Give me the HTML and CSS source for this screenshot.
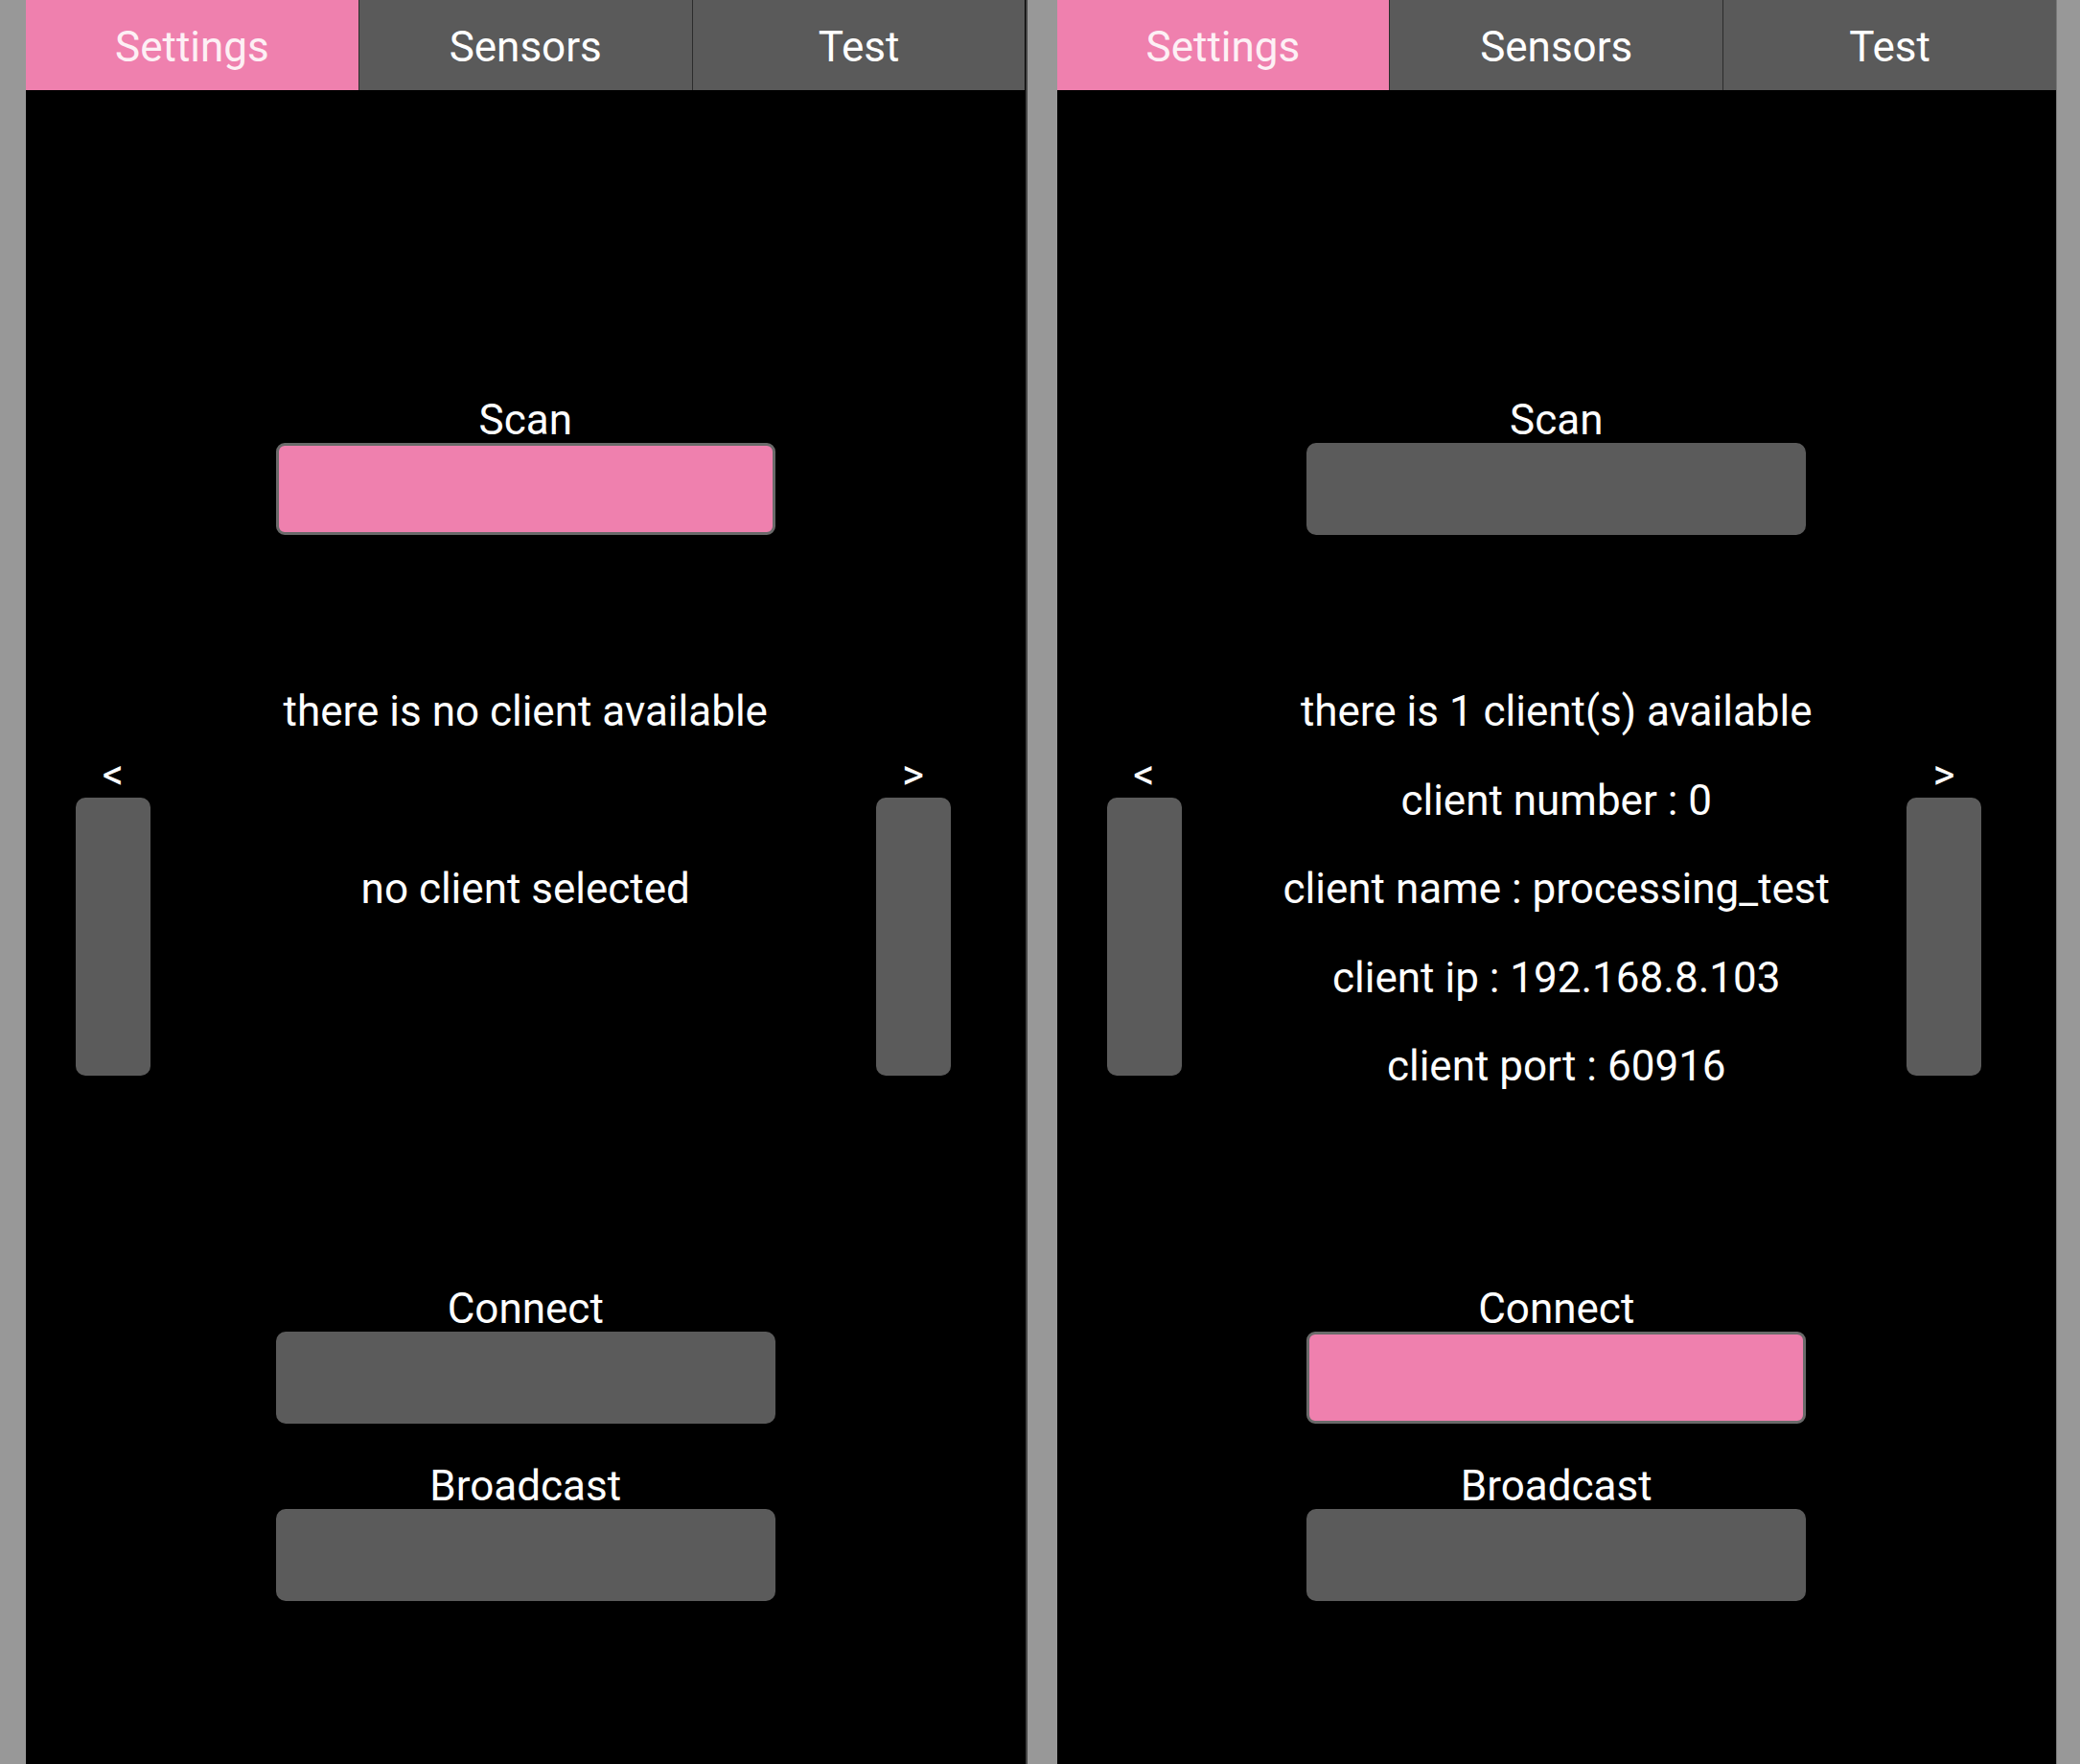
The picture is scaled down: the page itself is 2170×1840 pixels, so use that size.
FILE: index.html
```html
<!DOCTYPE html>
<html lang="en">
<head>
<meta charset="utf-8">
<title>Client settings</title>
<link rel="stylesheet" href="styles.css">
</head>
<body>
<div class="screen">
  <div class="edge edge-left"></div>

  <section class="panel">
    <nav class="tabs">
      <div class="tab active">Settings</div>
      <div class="tab">Sensors</div>
      <div class="tab">Test</div>
    </nav>
    <div class="control scan">
      <div class="caption">Scan</div>
      <div class="btn btn-on"></div>
    </div>
    <div class="clients">
      <div class="info">
        <p>there is no client available</p>
        <p></p>
        <p>no client selected</p>
        <p></p>
        <p></p>
      </div>
      <div class="side side-prev">
        <div class="caption">&lt;</div>
        <div class="side-btn"></div>
      </div>
      <div class="side side-next">
        <div class="caption">&gt;</div>
        <div class="side-btn"></div>
      </div>
    </div>
    <div class="control connect">
      <div class="caption">Connect</div>
      <div class="btn"></div>
    </div>
    <div class="control broadcast">
      <div class="caption">Broadcast</div>
      <div class="btn"></div>
    </div>
  </section>

  <div class="edge edge-mid"></div>

  <section class="panel">
    <nav class="tabs">
      <div class="tab active">Settings</div>
      <div class="tab">Sensors</div>
      <div class="tab">Test</div>
    </nav>
    <div class="control scan">
      <div class="caption">Scan</div>
      <div class="btn"></div>
    </div>
    <div class="clients">
      <div class="info">
        <p>there is 1 client(s) available</p>
        <p>client number : 0</p>
        <p>client name : processing_test</p>
        <p>client ip : 192.168.8.103</p>
        <p>client port : 60916</p>
      </div>
      <div class="side side-prev">
        <div class="caption">&lt;</div>
        <div class="side-btn"></div>
      </div>
      <div class="side side-next">
        <div class="caption">&gt;</div>
        <div class="side-btn"></div>
      </div>
    </div>
    <div class="control connect">
      <div class="caption">Connect</div>
      <div class="btn btn-on"></div>
    </div>
    <div class="control broadcast">
      <div class="caption">Broadcast</div>
      <div class="btn"></div>
    </div>
  </section>

  <div class="edge edge-right"></div>
</div>
</body>
</html>
```
FILE: styles.css
```css
html, body {
  margin: 0;
  padding: 0;
  background: #000;
}

body {
  font-family: Roboto, "Liberation Sans", sans-serif;
  color: #fff;
}

.screen {
  display: flex;
  height: 1840px;
  overflow: hidden;
}

.edge {
  flex: none;
  background: #989898;
  box-sizing: border-box;
}

.edge-left { width: 27px; }
.edge-mid { width: 33px; border-left: 2px solid #444; }
.edge-right { width: 25px; border-left: 1px solid #777; }

.panel {
  flex: 1 1 0;
  min-width: 0;
  background: #000;
  display: flex;
  flex-direction: column;
}

.tabs {
  display: flex;
  height: 94px;
  flex: none;
}

.tab {
  flex: 1 1 0;
  display: flex;
  align-items: center;
  justify-content: center;
  padding-top: 4px;
  box-sizing: border-box;
  background: #5a5a5a;
  color: #fff;
  font-size: 44px;
  border-left: 1px solid #2c2c2c;
}

.tab:first-child { border-left: none; }

.tab.active {
  background: #ef80ae;
  color: #fdf0f5;
}

.control {
  display: flex;
  flex-direction: column;
  align-items: center;
}

.caption {
  font-size: 44px;
  line-height: 48px;
  text-align: center;
  color: #fff;
}

.btn {
  width: 521px;
  height: 96px;
  box-sizing: border-box;
  border-radius: 10px;
  background: #5b5b5b;
}

.btn-on {
  background: #ef80ae;
  border: 3px solid #6a6a6a;
  border-radius: 9px;
}

.scan { margin-top: 320px; }

.clients {
  display: grid;
  grid-template-columns: 52px 78px 1fr 78px 78px;
  margin-top: 138px;
}

.info {
  grid-row: 1;
  grid-column: 1 / -1;
  text-align: center;
  font-size: 44px;
  line-height: 92.5px;
}

.info p {
  margin: 0;
  height: 92.5px;
}

.side {
  grid-row: 1;
  margin-top: 88px;
  display: flex;
  flex-direction: column;
  align-items: center;
}

.side-prev { grid-column: 2; }
.side-next { grid-column: 4; }

.side-btn {
  width: 78px;
  height: 290px;
  border-radius: 10px;
  background: #5b5b5b;
}

.connect { margin-top: 182px; }
.broadcast { margin-top: 41px; }
```
